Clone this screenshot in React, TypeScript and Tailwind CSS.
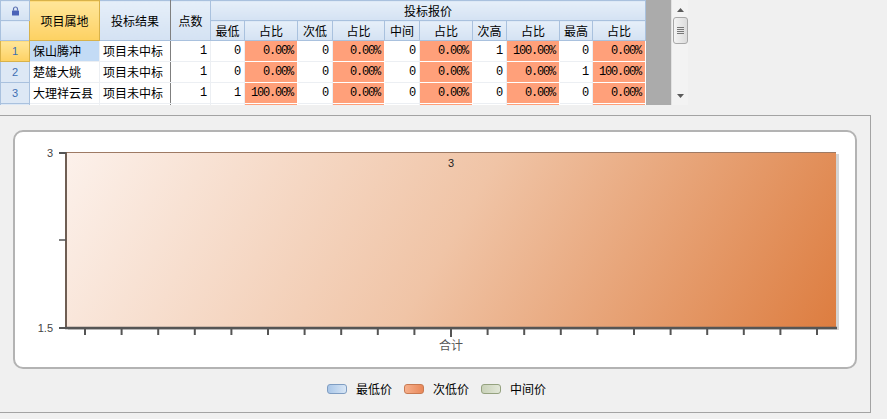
import React from "react";

type Row = {
  area: string;
  result: string;
  points: string;
  cells: [string, string][];
};

const rows: Row[] = [
  {
    area: "保山腾冲",
    result: "项目未中标",
    points: "1",
    cells: [
      ["0", "0.00%"],
      ["0", "0.00%"],
      ["0", "0.00%"],
      ["1", "100.00%"],
      ["0", "0.00%"],
    ],
  },
  {
    area: "楚雄大姚",
    result: "项目未中标",
    points: "1",
    cells: [
      ["0", "0.00%"],
      ["0", "0.00%"],
      ["0", "0.00%"],
      ["0", "0.00%"],
      ["1", "100.00%"],
    ],
  },
  {
    area: "大理祥云县",
    result: "项目未中标",
    points: "1",
    cells: [
      ["1", "100.00%"],
      ["0", "0.00%"],
      ["0", "0.00%"],
      ["0", "0.00%"],
      ["0", "0.00%"],
    ],
  },
];

// partly scrolled-in row at the bottom edge, nothing readable
const emptyRow: Row = {
  area: "",
  result: "",
  points: "",
  cells: [
    ["", ""],
    ["", ""],
    ["", ""],
    ["", ""],
    ["", ""],
  ],
};

const subHeads = ["最低", "次低", "中间", "次高", "最高"];
const colWidths = [29, 70, 71, 40, 34, 53, 35, 52, 35, 53, 34, 53, 33, 53];

const hdr =
  "border border-[#a9c1de] bg-linear-to-b from-[#e6eff9] to-[#d4e2f3] text-center font-normal p-0";
const cell = "border border-[#eceff3] p-0 h-[21px] leading-[20px]";
const num = "text-right pr-[4px] font-['Liberation_Mono',monospace] tracking-[-1.2px]";

function ScrollBar() {
  return (
    <div className="w-[17px] h-[105px] bg-[#f3f3f3] border-l border-[#e2e2e2] flex flex-col items-center">
      <svg width="9" height="6" className="mt-[7px]">
        <path d="M1 5 L4.5 1 L8 5 Z" fill="#5a5a5a" />
      </svg>
      <div className="mt-[4px] w-[15px] h-[27px] rounded-[3px] border border-[#a8a8a8] bg-linear-to-r from-[#f4f4f4] to-[#dcdcdc] flex flex-col items-center justify-center gap-[1px]">
        <div className="w-[7px] h-px bg-[#777]" />
        <div className="w-[7px] h-px bg-[#777]" />
        <div className="w-[7px] h-px bg-[#777]" />
        <div className="w-[7px] h-px bg-[#777]" />
      </div>
      <div className="flex-1" />
      <svg width="9" height="6" className="mb-[6px]">
        <path d="M1 1 L4.5 5 L8 1 Z" fill="#5a5a5a" />
      </svg>
    </div>
  );
}

function Grid() {
  return (
    <div className="w-[646px] h-[105px] overflow-hidden bg-white">
      <table className="table-fixed border-collapse text-[12px] text-black">
        <colgroup>
          {colWidths.map((w, i) => (
            <col key={i} style={{ width: w }} />
          ))}
        </colgroup>
        <thead>
          <tr className="h-[20px]">
            <th className={hdr}>
              <div className="flex justify-center">
                <svg width="9" height="10" viewBox="0 0 9 10">
                  <path d="M2.5 4.5 V3 a2 2 0 0 1 4 0 V4.5" fill="none" stroke="#5a6fb0" strokeWidth="1.2" />
                  <rect x="1" y="4.5" width="7" height="5" rx="0.5" fill="#4b63b8" />
                </svg>
              </div>
            </th>
            <th
              rowSpan={2}
              className="border border-[#d8b24a] bg-linear-to-b from-[#ffe699] to-[#fdd161] text-center font-normal p-0"
            >
              项目属地
            </th>
            <th rowSpan={2} className={hdr + " border-r-[#7f7f7f]"}>
              投标结果
            </th>
            <th rowSpan={2} className={hdr}>
              点数
            </th>
            <th colSpan={10} className={hdr}>
              投标报价
            </th>
          </tr>
          <tr className="h-[20px]">
            <th className={hdr}></th>
            {subHeads.map((s) => (
              <React.Fragment key={s}>
                <th className={hdr}>{s}</th>
                <th className={hdr}>占比</th>
              </React.Fragment>
            ))}
          </tr>
        </thead>
        <tbody>
          {[...rows, emptyRow].map((r, i) => (
            <tr key={i}>
              <td
                className={
                  "border p-0 h-[21px] text-center text-[11px] text-[#3d6fb3] font-['Liberation_Sans',sans-serif] " +
                  (i === 0
                    ? "border-[#d8b24a] bg-linear-to-b from-[#ffe699] to-[#fdd161]"
                    : "border-[#a9c1de] bg-[#dde8f5]")
                }
              >
                {i < rows.length ? i + 1 : ""}
              </td>
              <td className={cell + " pl-[3px] " + (i === 0 ? "bg-[#c3dbf5]" : "")}>{r.area}</td>
              <td className={cell + " pl-[3px] border-r-[#7f7f7f]"}>{r.result}</td>
              <td className={cell + " " + num}>{r.points}</td>
              {r.cells.map(([a, b], j) => (
                <React.Fragment key={j}>
                  <td className={cell + " " + num}>{a}</td>
                  <td className={"border border-white p-0 h-[21px] leading-[20px] bg-[#ffa07a] " + num}>{b}</td>
                </React.Fragment>
              ))}
            </tr>
          ))}
        </tbody>
      </table>
    </div>
  );
}

function Chart() {
  const ticks = Array.from({ length: 21 }, (_, i) => 70 + i * 36.6);
  return (
    <svg width="840" height="235" className="block">
      <defs>
        <linearGradient id="bar" gradientUnits="userSpaceOnUse" x1="51" y1="20" x2="700" y2="400">
          <stop offset="0" stopColor="#fcf1eb" />
          <stop offset="0.5" stopColor="#f0c4a6" />
          <stop offset="1" stopColor="#dd7d40" />
        </linearGradient>
      </defs>
      <rect x="53" y="22" width="771" height="176" fill="#d4d4d4" />
      <rect x="51" y="20" width="770" height="176" fill="url(#bar)" />
      <line x1="51" y1="20.5" x2="821" y2="20.5" stroke="#9e7a64" strokeWidth="1" />
      <line x1="51" y1="20" x2="51" y2="197" stroke="#6f5e53" strokeWidth="2" />
      <line x1="44" y1="21" x2="51" y2="21" stroke="#555" strokeWidth="2" />
      <line x1="44" y1="108" x2="51" y2="108" stroke="#555" strokeWidth="1.5" />
      <line x1="44" y1="196" x2="51" y2="196" stroke="#555" strokeWidth="2" />
      <line x1="50" y1="196" x2="822" y2="196" stroke="#555" strokeWidth="2.5" />
      {ticks.map((x, i) => (
        <line key={i} x1={x} y1="196" x2={x} y2={i === 10 ? 205 : 203} stroke="#555" strokeWidth="2" />
      ))}
      <g fontFamily="'Liberation Sans', sans-serif" fontSize="11" fill="#444">
        <text x="38" y="25" textAnchor="end">3</text>
        <text x="38" y="200" textAnchor="end">1.5</text>
        <text x="436" y="35" textAnchor="middle" fill="#222">3</text>
      </g>
      <text x="436" y="218" textAnchor="middle" fontFamily="'Noto Sans CJK SC', sans-serif" fontSize="12" fill="#555">
        合计
      </text>
    </svg>
  );
}

function LegendItem({ label, from, to, border }: { label: string; from: string; to: string; border: string }) {
  return (
    <div className="flex items-center gap-[9px]">
      <div
        className="w-[20px] h-[10px] rounded-[3px] border"
        style={{ background: `linear-gradient(to right, ${from}, ${to})`, borderColor: border }}
      />
      <span className="text-[12px] text-black">{label}</span>
    </div>
  );
}

export default function App() {
  return (
    <div className="w-[887px] h-[419px] bg-[#f0f0f0] overflow-hidden font-['Noto_Sans_CJK_SC','Liberation_Sans',sans-serif]">
      <div className="flex h-[105px]">
        <Grid />
        <div className="w-[25px] h-[105px] bg-[#ababab]" />
        <ScrollBar />
      </div>
      <div className="mt-[10px] w-[871px] h-[298px] border-t border-r border-b border-[#a3a3a3] bg-[#f0f0f0]">
        <div className="ml-[13px] mt-[14px] w-[844px] h-[239px] rounded-[10px] border-2 border-[#b3b3b3] bg-white overflow-hidden">
          <Chart />
        </div>
        <div className="mt-[12px] flex justify-center gap-[12px] pl-[3px] leading-[16px]">
          <LegendItem label="最低价" from="#a9c6e8" to="#d8e6f5" border="#7f9dc2" />
          <LegendItem label="次低价" from="#f6b08c" to="#e9885a" border="#c87a52" />
          <LegendItem label="中间价" from="#c9d2b9" to="#e2e7d8" border="#95a27f" />
        </div>
      </div>
    </div>
  );
}
